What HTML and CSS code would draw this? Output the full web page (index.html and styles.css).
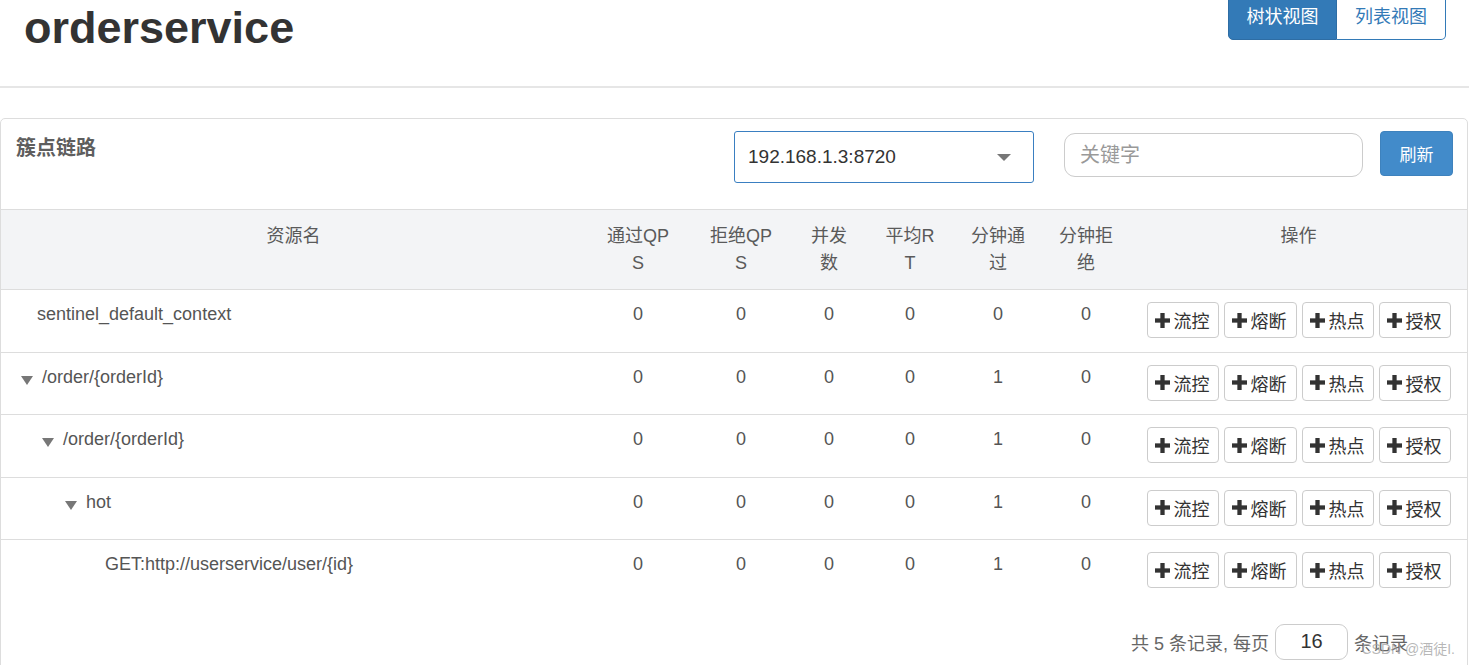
FILE: index.html
```html
<!DOCTYPE html>
<html lang="zh-CN">
<head>
<meta charset="utf-8">
<title>orderservice</title>
<link rel="stylesheet" href="styles.css">
</head>
<body>
<div class="topbar">
  <h1 class="app-title">orderservice</h1>
  <div class="view-switch">
    <button class="view-btn active">树状视图</button>
    <button class="view-btn">列表视图</button>
  </div>
</div>

<div class="panel">
  <div class="panel-heading">
    <div class="panel-title">簇点链路</div>
    <div class="machine-select">
      <span class="machine-value">192.168.1.3:8720</span>
      <span class="select-caret"></span>
    </div>
    <input class="search-input" type="text" placeholder="关键字">
    <button class="refresh-btn">刷新</button>
  </div>

  <table class="res-table">
    <colgroup>
      <col class="c-name">
      <col class="c-qps">
      <col class="c-bqps">
      <col class="c-thread">
      <col class="c-rt">
      <col class="c-min">
      <col class="c-min">
      <col>
    </colgroup>
    <thead>
      <tr>
        <th>资源名</th>
        <th>通过QPS</th>
        <th>拒绝QPS</th>
        <th>并发数</th>
        <th>平均RT</th>
        <th>分钟通过</th>
        <th>分钟拒绝</th>
        <th>操作</th>
      </tr>
    </thead>
    <tbody>
      <tr>
        <td class="name lvl1"><span class="leaf"></span>sentinel_default_context</td>
        <td>0</td><td>0</td><td>0</td><td>0</td><td>0</td><td>0</td>
        <td class="ops"><div class="ops-row">
          <button class="op-btn"><svg class="plus" viewBox="0 0 14 14"><rect x="5" y="0" width="4" height="14"/><rect x="0" y="5" width="14" height="4"/></svg>流控</button>
          <button class="op-btn"><svg class="plus" viewBox="0 0 14 14"><rect x="5" y="0" width="4" height="14"/><rect x="0" y="5" width="14" height="4"/></svg>熔断</button>
          <button class="op-btn"><svg class="plus" viewBox="0 0 14 14"><rect x="5" y="0" width="4" height="14"/><rect x="0" y="5" width="14" height="4"/></svg>热点</button>
          <button class="op-btn"><svg class="plus" viewBox="0 0 14 14"><rect x="5" y="0" width="4" height="14"/><rect x="0" y="5" width="14" height="4"/></svg>授权</button>
        </div></td>
      </tr>
      <tr>
        <td class="name lvl1"><span class="tree-caret"></span>/order/{orderId}</td>
        <td>0</td><td>0</td><td>0</td><td>0</td><td>1</td><td>0</td>
        <td class="ops"><div class="ops-row">
          <button class="op-btn"><svg class="plus" viewBox="0 0 14 14"><rect x="5" y="0" width="4" height="14"/><rect x="0" y="5" width="14" height="4"/></svg>流控</button>
          <button class="op-btn"><svg class="plus" viewBox="0 0 14 14"><rect x="5" y="0" width="4" height="14"/><rect x="0" y="5" width="14" height="4"/></svg>熔断</button>
          <button class="op-btn"><svg class="plus" viewBox="0 0 14 14"><rect x="5" y="0" width="4" height="14"/><rect x="0" y="5" width="14" height="4"/></svg>热点</button>
          <button class="op-btn"><svg class="plus" viewBox="0 0 14 14"><rect x="5" y="0" width="4" height="14"/><rect x="0" y="5" width="14" height="4"/></svg>授权</button>
        </div></td>
      </tr>
      <tr>
        <td class="name lvl2"><span class="tree-caret"></span>/order/{orderId}</td>
        <td>0</td><td>0</td><td>0</td><td>0</td><td>1</td><td>0</td>
        <td class="ops"><div class="ops-row">
          <button class="op-btn"><svg class="plus" viewBox="0 0 14 14"><rect x="5" y="0" width="4" height="14"/><rect x="0" y="5" width="14" height="4"/></svg>流控</button>
          <button class="op-btn"><svg class="plus" viewBox="0 0 14 14"><rect x="5" y="0" width="4" height="14"/><rect x="0" y="5" width="14" height="4"/></svg>熔断</button>
          <button class="op-btn"><svg class="plus" viewBox="0 0 14 14"><rect x="5" y="0" width="4" height="14"/><rect x="0" y="5" width="14" height="4"/></svg>热点</button>
          <button class="op-btn"><svg class="plus" viewBox="0 0 14 14"><rect x="5" y="0" width="4" height="14"/><rect x="0" y="5" width="14" height="4"/></svg>授权</button>
        </div></td>
      </tr>
      <tr>
        <td class="name lvl3"><span class="tree-caret"></span>hot</td>
        <td>0</td><td>0</td><td>0</td><td>0</td><td>1</td><td>0</td>
        <td class="ops"><div class="ops-row">
          <button class="op-btn"><svg class="plus" viewBox="0 0 14 14"><rect x="5" y="0" width="4" height="14"/><rect x="0" y="5" width="14" height="4"/></svg>流控</button>
          <button class="op-btn"><svg class="plus" viewBox="0 0 14 14"><rect x="5" y="0" width="4" height="14"/><rect x="0" y="5" width="14" height="4"/></svg>熔断</button>
          <button class="op-btn"><svg class="plus" viewBox="0 0 14 14"><rect x="5" y="0" width="4" height="14"/><rect x="0" y="5" width="14" height="4"/></svg>热点</button>
          <button class="op-btn"><svg class="plus" viewBox="0 0 14 14"><rect x="5" y="0" width="4" height="14"/><rect x="0" y="5" width="14" height="4"/></svg>授权</button>
        </div></td>
      </tr>
      <tr>
        <td class="name lvl4"><span class="leaf"></span>GET:http://userservice/user/{id}</td>
        <td>0</td><td>0</td><td>0</td><td>0</td><td>1</td><td>0</td>
        <td class="ops"><div class="ops-row">
          <button class="op-btn"><svg class="plus" viewBox="0 0 14 14"><rect x="5" y="0" width="4" height="14"/><rect x="0" y="5" width="14" height="4"/></svg>流控</button>
          <button class="op-btn"><svg class="plus" viewBox="0 0 14 14"><rect x="5" y="0" width="4" height="14"/><rect x="0" y="5" width="14" height="4"/></svg>熔断</button>
          <button class="op-btn"><svg class="plus" viewBox="0 0 14 14"><rect x="5" y="0" width="4" height="14"/><rect x="0" y="5" width="14" height="4"/></svg>热点</button>
          <button class="op-btn"><svg class="plus" viewBox="0 0 14 14"><rect x="5" y="0" width="4" height="14"/><rect x="0" y="5" width="14" height="4"/></svg>授权</button>
        </div></td>
      </tr>
    </tbody>
  </table>

  <div class="pager">
    <span>共 5 条记录, 每页</span>
    <input class="page-size" type="text" value="16">
    <span>条记录</span>
  </div>
</div>

<div class="watermark">CSDN @酒徒I.</div>
</body>
</html>
```

FILE: styles.css
```css
* { box-sizing: border-box; }

html, body {
  margin: 0;
  padding: 0;
  background: #fff;
  overflow: hidden;
}

body {
  font-family: "Liberation Sans", "Noto Sans CJK SC", sans-serif;
  color: #333;
  width: 1469px;
  height: 665px;
  position: relative;
}

/* ---------- top bar ---------- */
.topbar {
  display: flex;
  justify-content: space-between;
  align-items: flex-start;
  height: 88px;
  padding: 0 23px 0 24px;
  border-bottom: 2px solid #e6e6e6;
}

.app-title {
  margin: 3px 0 0;
  font-size: 45px;
  line-height: 50px;
  font-weight: bold;
  color: #333;
}

.view-switch {
  display: flex;
  margin-top: -6px;
}

.view-btn {
  font-family: inherit;
  font-size: 18px;
  line-height: 24px;
  padding: 10px 0;
  height: 46px;
  width: 109px;
  white-space: nowrap;
  text-align: center;
  background: #fff;
  color: #337ab7;
  border: 1px solid #337ab7;
  cursor: pointer;
}

.view-btn:first-child {
  border-radius: 5px 0 0 5px;
}

.view-btn:last-child {
  border-radius: 0 5px 5px 0;
  border-left: none;
}

.view-btn.active {
  background: #337ab7;
  color: #fff;
  border-color: #2e6da4;
}

/* ---------- panel ---------- */
.panel {
  margin: 30px 1px 0 0;
  border: 1px solid #ddd;
  border-radius: 5px;
  padding-bottom: 20px;
}

.panel-heading {
  display: flex;
  align-items: flex-start;
  height: 90px;
  padding: 12px 14px 0 15px;
}

.panel-title {
  margin-top: 3px;
  font-size: 20px;
  line-height: 28px;
  font-weight: bold;
  color: #5e5e5e;
}

.machine-select {
  margin-left: auto;
  width: 300px;
  height: 52px;
  border: 1px solid #3a7fc1;
  border-radius: 3px;
  display: flex;
  align-items: center;
  justify-content: space-between;
  padding: 0 22px 0 13px;
}

.machine-value {
  font-size: 19px;
  color: #333;
}

.select-caret {
  width: 0;
  height: 0;
  border-left: 7px solid transparent;
  border-right: 7px solid transparent;
  border-top: 7px solid #777;
}

.search-input {
  margin: 2px 0 0 30px;
  width: 299px;
  height: 44px;
  border: 1px solid #ccc;
  border-radius: 11px;
  padding: 0 15px;
  font-family: inherit;
  font-size: 20px;
  color: #555;
  outline: none;
}

.search-input::placeholder {
  color: #999;
}

.refresh-btn {
  margin-left: 17px;
  width: 73px;
  height: 45px;
  background: #428bca;
  border: 1px solid #3e82bd;
  border-radius: 4px;
  color: #fff;
  font-family: inherit;
  font-size: 17px;
  cursor: pointer;
}

/* ---------- table ---------- */
.res-table {
  width: 100%;
  border-collapse: collapse;
  table-layout: fixed;
  font-size: 18px;
  color: #555;
}

.c-name { width: 585px; }
.c-qps { width: 104px; }
.c-bqps { width: 102px; }
.c-thread { width: 74px; }
.c-rt { width: 88px; }
.c-min { width: 88px; }

.res-table thead tr {
  background: #f3f4f6;
}

.res-table th {
  font-weight: normal;
  color: #5a5a5a;
  line-height: 27px;
  height: 80px;
  padding: 13px 16px 12px;
  vertical-align: top;
  text-align: center;
  word-break: break-all;
  border-top: 1px solid #ddd;
  border-bottom: 1px solid #ddd;
}

.res-table td {
  padding: 11px 8px 14.5px;
  line-height: 26px;
  text-align: center;
  vertical-align: top;
  border-bottom: 1px solid #ddd;
}

.res-table td.ops {
  padding-top: 12px;
  padding-bottom: 13.5px;
}

.res-table tbody tr:last-child td {
  border-bottom: none;
}

.res-table td.name {
  text-align: left;
  white-space: nowrap;
}

.lvl1 { padding-left: 20px !important; }
.lvl2 { padding-left: 41px !important; }
.lvl3 { padding-left: 64px !important; }
.lvl4 { padding-left: 88px !important; }

.tree-caret {
  display: inline-block;
  width: 0;
  height: 0;
  border-left: 6px solid transparent;
  border-right: 6px solid transparent;
  border-top: 9px solid #777;
  margin-right: 9px;
  vertical-align: -2px;
}

.leaf {
  display: inline-block;
  width: 16px;
}

.ops-row {
  display: flex;
  justify-content: center;
  gap: 5px;
}

.op-btn {
  display: flex;
  align-items: center;
  gap: 4px;
  height: 36px;
  width: 72px;
  padding: 0 7px;
  background: #fff;
  border: 1px solid #ccc;
  border-radius: 4px;
  font-family: inherit;
  font-size: 18px;
  color: #333;
  cursor: pointer;
}

.op-btn:nth-child(2) { width: 73px; }

.plus {
  width: 15px;
  height: 15px;
  fill: #333;
  flex: none;
}

/* ---------- pager ---------- */
.pager {
  display: flex;
  align-items: center;
  justify-content: flex-end;
  gap: 6px;
  padding: 22px 59px 0 0;
  font-size: 18px;
  color: #666;
}

.page-size {
  width: 73px;
  height: 36px;
  border: 1px solid #ccc;
  border-radius: 9px;
  text-align: center;
  font-family: inherit;
  font-size: 20px;
  color: #333;
  outline: none;
}

.watermark {
  position: absolute;
  right: 14px;
  bottom: 7px;
  font-size: 14px;
  color: rgba(160, 160, 160, 0.75);
  pointer-events: none;
}
```
